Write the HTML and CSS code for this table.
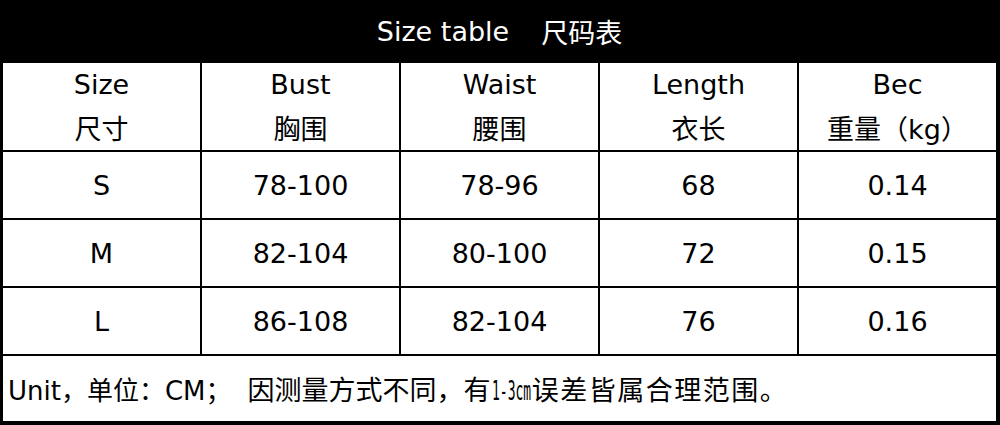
FILE: index.html
```html
<!DOCTYPE html>
<html lang="zh">
<head>
<meta charset="utf-8">
<title>Size table</title>
<link rel="stylesheet" href="styles.css">
</head>
<body>
<div class="sheet">
  <div class="title"><span>Size table</span><span class="title-cn">尺码表</span></div>

  <div class="cell head"><span>Size</span><span>尺寸</span></div>
  <div class="cell head"><span>Bust</span><span>胸围</span></div>
  <div class="cell head"><span>Waist</span><span>腰围</span></div>
  <div class="cell head"><span>Length</span><span>衣长</span></div>
  <div class="cell head"><span>Bec</span><span>重量（kg）</span></div>

  <div class="cell">S</div>
  <div class="cell">78-100</div>
  <div class="cell">78-96</div>
  <div class="cell">68</div>
  <div class="cell">0.14</div>

  <div class="cell">M</div>
  <div class="cell">82-104</div>
  <div class="cell">80-100</div>
  <div class="cell">72</div>
  <div class="cell">0.15</div>

  <div class="cell">L</div>
  <div class="cell">86-108</div>
  <div class="cell">82-104</div>
  <div class="cell">76</div>
  <div class="cell">0.16</div>

  <div class="note"><span>Unit，单位：CM；</span><span class="note-cn">因测量方式不同，有<span class="narrow">1-3cm</span><span class="wide">误差皆属合理范围。</span></span></div>
</div>
</body>
</html>
```

FILE: styles.css
```css
html, body {
  margin: 0;
  padding: 0;
  background: #ffffff;
}

.sheet {
  width: 1000px;
  height: 425px;
  box-sizing: border-box;
  background: #000000;
  padding: 0 4px 4px 3px;
  display: grid;
  grid-template-columns: repeat(5, 1fr);
  grid-template-rows: 61px 87px 66px 66px 66px 65px;
  gap: 2px;
  font-family: "DejaVu Sans", "Noto Sans CJK SC", sans-serif;
  font-size: 27px;
  color: #000000;
}

.title {
  grid-column: 1 / -1;
  background: #000000;
  color: #ffffff;
  display: flex;
  justify-content: center;
  align-items: center;
  padding-top: 2px;
}

.title-cn {
  margin-left: 32px;
  font-family: "Noto Sans CJK SC", sans-serif;
}

.cell {
  background: #ffffff;
  display: flex;
  justify-content: center;
  align-items: center;
}

.head {
  flex-direction: column;
  line-height: 45px;
}

.note {
  grid-column: 1 / -1;
  background: #ffffff;
  display: flex;
  align-items: center;
  padding-left: 5px;
  font-size: 26px;
}

.note-cn {
  margin-left: 16px;
  font-family: "Noto Sans CJK SC", sans-serif;
  font-size: 27px;
}

.narrow {
  display: inline-block;
  font-family: "DejaVu Sans Mono", monospace;
  font-size: 26px;
  transform: scaleX(0.5);
  transform-origin: left center;
  margin-right: -38px;
  margin-left: 1px;
}

.wide {
  letter-spacing: 1.5px;
}
```
